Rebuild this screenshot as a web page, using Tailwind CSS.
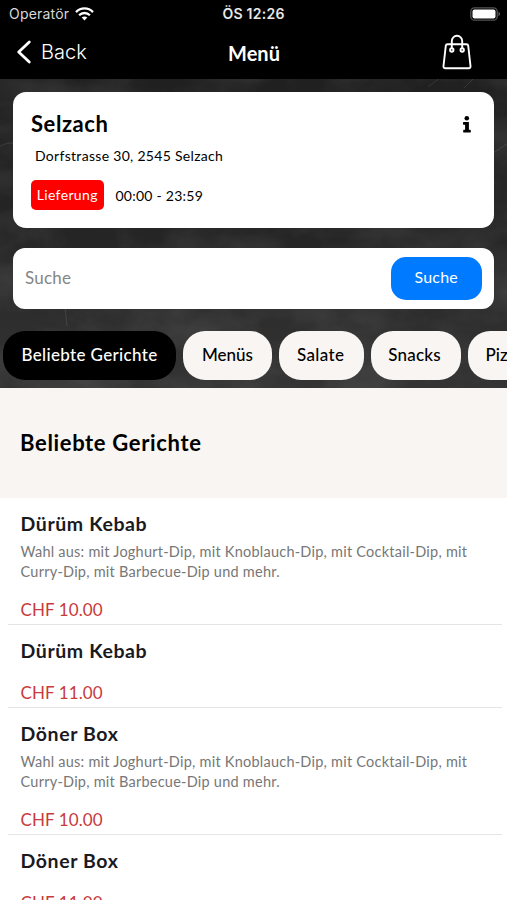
<!DOCTYPE html>
<html lang="de">
<head>
<meta charset="utf-8">
<title>Menü</title>
<script src="https://cdn.jsdelivr.net/npm/@tailwindcss/browser@4"></script>
</head>
<body class="w-[507px] h-[900px] overflow-hidden bg-white font-['Lato','Open_Sans',sans-serif] text-black">
<div class="flex h-[900px] w-[507px] flex-col overflow-hidden">
  <header class="h-[79px] shrink-0 bg-black text-white">
    <div class="grid h-[27px] grid-cols-3 items-center pl-[9px] pr-[6px] font-['Inter',sans-serif] text-[14px]">
      <div class="flex items-center gap-[6px] text-[#d8d8d8]"><span class="tracking-[0.200px]">Operatör</span>
        <svg width="19" height="14" viewBox="0 0 19 14" fill="none" stroke="#fff" stroke-width="2.3"><path d="M1 5.1C5.8.2 13.200.2 18 5.100"/><path d="M4.100 8.300c3-3.100 7.800-3.100 10.800 0"/><path d="M6.700 10.500c1.600-1.500 4-1.500 5.600 0L9.500 13.400z" fill="#fff" stroke="none"/></svg>
      </div>
      <div class="-ml-[3px] text-center font-semibold tracking-[0.250px] text-[#e8e8e8]">ÖS 12:26</div>
      <div class="flex justify-end"><svg width="31" height="14" viewBox="0 0 31 14"><rect x=".8" y=".8" width="26.400" height="12.400" rx="3.800" fill="none" stroke="#555" stroke-width="1.300"/><rect x="2.500" y="2.500" width="23" height="9" rx="2" fill="#fff"/><path d="M28.500 4.800c2 .8 2 3.600 0 4.400z" fill="#666"/></svg></div>
    </div>
    <div class="grid h-[50px] grid-cols-3 items-center pl-[16px] pr-[35px]">
      <div class="flex items-center gap-[9px]">
        <svg width="16" height="24" viewBox="0 0 16 24" fill="none" stroke="#fff" stroke-width="2.800" stroke-linecap="round" stroke-linejoin="round"><path d="M13.300 2 2.700 12l10.600 10"/></svg>
        <span class="font-['Inter',sans-serif] text-[20px] font-light">Back</span>
      </div>
      <div class="pl-[20px] pt-[1px] text-center text-[20px] font-bold">Menü</div>
      <div class="flex justify-end"><svg width="30" height="36" viewBox="0 0 30 36" fill="none" stroke="#fff" stroke-width="1.900"><path d="M5.500 10.200h19q1.500 0 1.700 1.500l2.300 20.300q.2 2.300-1.800 2.300H3.300q-2 0-1.800-2.300l2.300-20.300q.2-1.500 1.700-1.500z"/><path d="M9.800 15V7a5.200 5.200 0 0 1 10.400 0v8"/><circle cx="9.800" cy="16" r="1.700"/><circle cx="20.200" cy="16" r="1.700"/></svg></div>
    </div>
  </header>

  <section class="relative h-[309px] shrink-0 overflow-hidden bg-[#2b2b2b]">
    <svg class="absolute inset-0" width="507" height="309">
      <defs>
        <filter id="chalk" x="0" y="0" width="100%" height="100%"><feTurbulence type="fractalNoise" baseFrequency="0.015 0.022" numOctaves="5" seed="8"/><feColorMatrix values="0 0 0 0 1  0 0 0 0 1  0 0 0 0 1  0.3 0 0 0 -0.1"/></filter>
        <linearGradient id="shade" x1="0" y1="0" x2="0" y2="1"><stop offset="0" stop-color="#202020"/><stop offset=".5" stop-color="#252525"/><stop offset="1" stop-color="#343434"/></linearGradient>
      </defs>
      <rect width="507" height="309" fill="url(#shade)"/>
      <rect width="507" height="309" filter="url(#chalk)" opacity=".55"/>
      <g fill="none" stroke="#fff" stroke-opacity=".1"><path d="M428 8l12-9M464 9l10-10M0 67q7-4 14-3M493 74l14-9M64 220l3 27M128 226q14-5 28-3"/></g>
    </svg>
    <div class="relative pt-[12.500px]">
      <div class="mx-[13px] h-[136.500px] rounded-[13px] bg-white pl-[18px] pr-[22px] pt-[18px]">
        <div class="flex h-[28px] items-center justify-between">
          <h1 class="text-[22px] font-bold tracking-[0.550px]">Selzach</h1>
          <svg class="mt-[2px]" width="10" height="19" viewBox="0 0 10 19"><circle cx="4.800" cy="3.200" r="2.300"/><path d="M1.700 7h5.200v7.700h1.200q.7 0 .7.700v1.500q0 .7-.7.700H1.900q-.7 0-.7-.7v-1.500q0-.7.700-.7h1.200V9.700H1.700q-.7 0-.7-.7V7.700Q1 7 1.700 7z"/></svg>
        </div>
        <p class="mt-[8px] h-[20px] pl-[4px] text-[14px] leading-[20px] tracking-[0.300px]">Dorfstrasse 30, 2545 Selzach</p>
        <div class="mt-[14px] flex items-center gap-[12px]">
          <span class="flex h-[30.500px] w-[72.500px] items-center justify-center rounded-[5px] bg-[#ff0000] text-[14px] tracking-[0.350px] text-white">Lieferung</span>
          <span class="pt-[1px] text-[14px] tracking-[0.250px]">00:00 - 23:59</span>
        </div>
      </div>
      <div class="mx-[13px] mt-[19.500px] flex h-[61px] items-center justify-between rounded-[12px] bg-white pl-[12px] pr-[12px]">
        <span class="text-[17px] tracking-[0.200px] text-[#858585]">Suche</span>
        <span class="flex h-[43px] w-[91.500px] items-center justify-center rounded-[15px] bg-[#007aff] pb-[2px] text-[16px] tracking-[0.200px] text-white">Suche</span>
      </div>
      <nav class="ml-[3px] mt-[22px] flex h-[49px] w-[640px] gap-[7px] text-[17px] font-medium">
        <span class="flex w-[173px] items-center justify-center rounded-[22px] bg-black tracking-[0.350px] text-white">Beliebte Gerichte</span>
        <span class="flex w-[89px] items-center justify-center rounded-[22px] bg-[#f8f5f2]">Menüs</span>
        <span class="flex w-[84.500px] items-center justify-center rounded-[22px] bg-[#f8f5f2] pr-[1px] tracking-[0.400px]">Salate</span>
        <span class="flex w-[90px] items-center justify-center rounded-[22px] bg-[#f8f5f2] pr-[2px] tracking-[0.200px]">Snacks</span>
        <span class="flex w-[84px] items-center rounded-[22px] bg-[#f8f5f2] pl-[18px]">Pizza</span>
      </nav>
    </div>
  </section>

  <section class="flex h-[110px] shrink-0 items-center bg-[#f8f5f2] pb-[1px] pl-[20px]"><h2 class="text-[22px] font-bold tracking-[0.650px]">Beliebte Gerichte</h2></section>

  <main class="shrink-0 pl-[8px] pr-[5px]">
    <article class="flex h-[127px] flex-col border-b border-[#e5e5e5] pl-[12.500px] pt-[12px]">
      <h3 class="h-[27px] text-[19.500px] font-bold leading-[27px] tracking-[0.600px] text-[#1a1a1e]">Dürüm Kebab</h3>
      <p class="mt-[5px] text-[14.500px] leading-[20px] tracking-[0.240px] text-[#777]">Wahl aus: mit Joghurt-Dip, mit Knoblauch-Dip, mit Cocktail-Dip, mit<br>Curry-Dip, mit Barbecue-Dip und mehr.</p>
      <p class="mt-auto pb-[2px] text-[17px] leading-[24px] tracking-[0.100px] text-[#c83a3c]">CHF 10.00</p>
    </article>
    <article class="flex h-[83px] flex-col border-b border-[#e5e5e5] pl-[12.500px] pt-[12px]">
      <h3 class="h-[27px] text-[19.500px] font-bold leading-[27px] tracking-[0.600px] text-[#1a1a1e]">Dürüm Kebab</h3>
      <p class="mt-auto pb-[2px] text-[17px] leading-[24px] tracking-[0.100px] text-[#c83a3c]">CHF 11.00</p>
    </article>
    <article class="flex h-[127px] flex-col border-b border-[#e5e5e5] pl-[12.500px] pt-[12px]">
      <h3 class="h-[27px] text-[19.500px] font-bold leading-[27px] tracking-[0.600px] text-[#1a1a1e]">Döner Box</h3>
      <p class="mt-[5px] text-[14.500px] leading-[20px] tracking-[0.240px] text-[#777]">Wahl aus: mit Joghurt-Dip, mit Knoblauch-Dip, mit Cocktail-Dip, mit<br>Curry-Dip, mit Barbecue-Dip und mehr.</p>
      <p class="mt-auto pb-[2px] text-[17px] leading-[24px] tracking-[0.100px] text-[#c83a3c]">CHF 10.00</p>
    </article>
    <article class="flex h-[83px] flex-col pl-[12.500px] pt-[12px]">
      <h3 class="h-[27px] text-[19.500px] font-bold leading-[27px] tracking-[0.600px] text-[#1a1a1e]">Döner Box</h3>
      <p class="mt-auto pb-[3px] text-[17px] leading-[24px] tracking-[0.100px] text-[#c83a3c]">CHF 11.00</p>
    </article>
  </main>
</div>
</body>
</html>
